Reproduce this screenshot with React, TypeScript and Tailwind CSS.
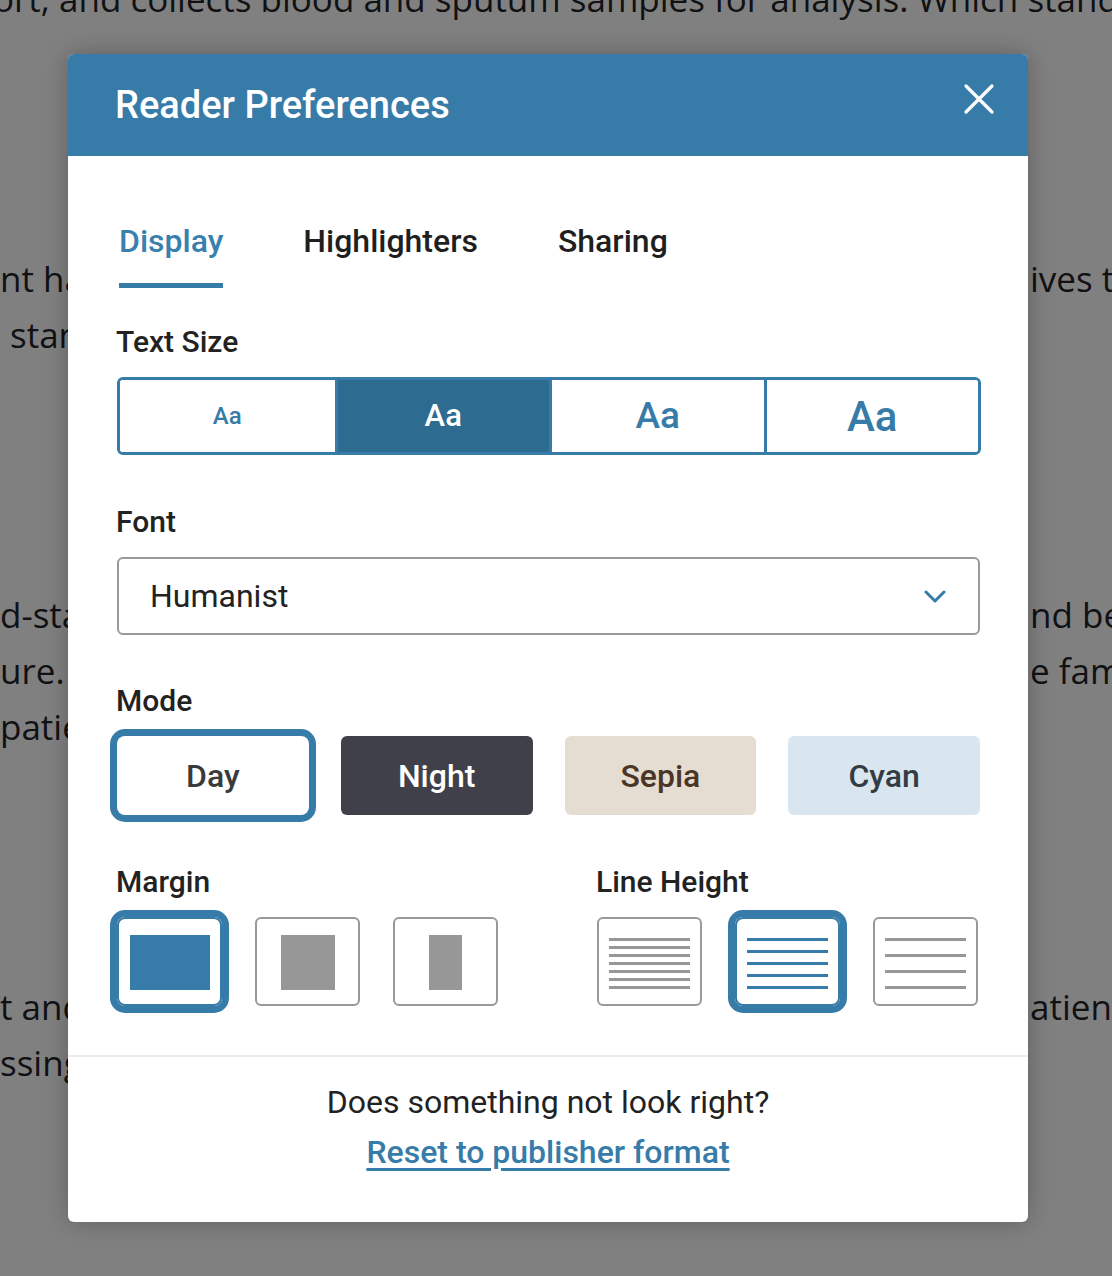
import { useState } from "react";

const BLUE = "#377ca9";

type BgLine = { left?: string; right?: string; indent?: boolean };

// visible scraps of the article behind the overlay, one entry per 56px line
const bgLines: BgLine[] = [
    {},
    {},
    {},
    {},
    { left: "nt has been admitted", right: "ives the patient" },
    { left: "standard", indent: true },
    {},
    {},
    {},
    {},
    { left: "d-standard", right: "nd begins" },
    { left: "ure. The nurse", right: "e family" },
    { left: "patient" },
    {},
    {},
    {},
    {},
    { left: "t and the", right: "atient's" },
    { left: "ssing the" },
    {},
    {},
    {}
];

const Background = () => (
    <div
        className="-mt-[29px] text-[35px] leading-[56px] text-[#111114]"
        style={{ fontFamily: "'Open Sans', 'Liberation Sans', sans-serif" }}
    >
        <div className="h-[56px] whitespace-nowrap -ml-[7px]">
            ort, and collects blood and sputum samples for analysis. Which standard
        </div>
        {bgLines.map((line, i) => (
            <div key={i} className="grid h-[56px] grid-cols-[1030px_1fr] whitespace-nowrap">
                <span className={line.indent ? "pl-[10px]" : ""}>{line.left}</span>
                <span>{line.right}</span>
            </div>
        ))}
    </div>
);

const CloseIcon = () => (
    <svg width="32" height="32" viewBox="0 0 32 32" fill="none">
        <path d="M3 3L29 29M29 3L3 29" stroke="white" strokeWidth="3.2" strokeLinecap="round" />
    </svg>
);

const ChevronDown = () => (
    <svg width="22" height="13" viewBox="0 0 22 13" fill="none">
        <path d="M2 2L11 11L20 2" stroke={BLUE} strokeWidth="3" strokeLinecap="round" strokeLinejoin="round" />
    </svg>
);

const Label = ({ text }: { text: string }) => (
    <div className="text-[30px] font-medium leading-[34px] text-[#222]">{text}</div>
);

const sizes = ["text-[24px]", "text-[31px]", "text-[37px]", "text-[42px]"];

const modes = [
    { name: "Day", className: "bg-white text-[#3a3a3a]" },
    { name: "Night", className: "bg-[#40404b] text-white" },
    { name: "Sepia", className: "bg-[#e5ddd2] text-[#4b3526]" },
    { name: "Cyan", className: "bg-[#d9e6ef] text-[#343b44]" }
];

const margins = ["w-[80px]", "w-[54px]", "w-[33px]"];
const lineCounts = [7, 5, 4];

const optionBox = (selected: boolean) =>
    selected
        ? "border-2 border-[#377ca9] ring-[7px] ring-[#377ca9] rounded-lg"
        : "border-2 border-[#999] rounded-md";

export default function App() {
    const [tab, setTab] = useState(0);
    const [size, setSize] = useState(1);
    const [mode, setMode] = useState(0);
    const [margin, setMargin] = useState(0);
    const [lineHeight, setLineHeight] = useState(1);

    return (
        <div className="relative h-[1276px] w-full overflow-hidden bg-[#808080]">
            <Background />

            <div
                className="absolute left-[68px] top-[54px] z-10 w-[960px] overflow-hidden rounded-md bg-white shadow-[0_0_24px_rgba(0,0,0,0.25)]"
                style={{ fontFamily: "Roboto, 'Liberation Sans', sans-serif" }}
            >
                <header className="flex h-[102px] items-center justify-between bg-[#377ca9] pl-[47px] pr-[33px]">
                    <h1 className="text-[38px] font-medium text-white">Reader Preferences</h1>
                    <button className="-mt-[12px]">
                        <CloseIcon />
                    </button>
                </header>

                <div className="px-[48px] pt-[65px]">
                    <nav className="ml-[3px] flex gap-[80px]">
                        {["Display", "Highlighters", "Sharing"].map((name, i) => (
                            <button key={name} onClick={() => setTab(i)} className="flex flex-col">
                                <span
                                    className={`text-[32px] font-medium leading-[40px] ${
                                        tab === i ? "text-[#3a80ad]" : "text-[#1f1f1f]"
                                    }`}
                                >
                                    {name}
                                </span>
                                <span
                                    className={`mt-[22px] h-[5px] w-full ${tab === i ? "bg-[#377ca9]" : "bg-transparent"}`}
                                />
                            </button>
                        ))}
                    </nav>

                    <div className="mt-[37px]">
                        <Label text="Text Size" />
                    </div>
                    <div className="mt-[18px] ml-[1px] -mr-[1px] grid h-[78px] grid-cols-4 overflow-hidden rounded-md border-[3px] border-[#377ca9]">
                        {sizes.map((cls, i) => (
                            <button
                                key={i}
                                onClick={() => setSize(i)}
                                className={`flex items-center justify-center font-medium ${cls} ${
                                    i > 0 ? "border-l-[3px] border-[#377ca9]" : ""
                                } ${size === i ? "bg-[#2d6b90] text-white" : "bg-white text-[#377ca9]"}`}
                            >
                                Aa
                            </button>
                        ))}
                    </div>

                    <div className="mt-[50px]">
                        <Label text="Font" />
                    </div>
                    <div className="mt-[18px] ml-[1px] flex h-[78px] items-center justify-between rounded-md border-2 border-[#999] pl-[31px] pr-[32px]">
                        <span className="text-[32px] text-[#222]">Humanist</span>
                        <ChevronDown />
                    </div>

                    <div className="mt-[49px]">
                        <Label text="Mode" />
                    </div>
                    <div className="mt-[18px] ml-[1px] flex gap-[32px]">
                        {modes.map((m, i) => (
                            <button
                                key={m.name}
                                onClick={() => setMode(i)}
                                className={`flex h-[79px] w-[192px] items-center justify-center text-[32px] font-medium ${m.className} ${
                                    mode === i ? "rounded-lg ring-[7px] ring-[#377ca9]" : "rounded-md"
                                }`}
                            >
                                {m.name}
                            </button>
                        ))}
                    </div>

                    <div className="mt-[50px] grid grid-cols-[480px_1fr]">
                        <div>
                            <Label text="Margin" />
                            <div className="mt-[18px] ml-[1px] flex gap-[33px]">
                                {margins.map((w, i) => (
                                    <button
                                        key={i}
                                        onClick={() => setMargin(i)}
                                        className={`flex h-[89px] w-[105px] items-center justify-center ${optionBox(margin === i)}`}
                                    >
                                        <span
                                            className={`mt-[2px] h-[55px] ${w} ${margin === i ? "bg-[#377ca9]" : "bg-[#979797]"}`}
                                        />
                                    </button>
                                ))}
                            </div>
                        </div>
                        <div>
                            <Label text="Line Height" />
                            <div className="mt-[18px] ml-[1px] flex gap-[33px]">
                                {lineCounts.map((count, i) => (
                                    <button
                                        key={i}
                                        onClick={() => setLineHeight(i)}
                                        className={`flex h-[89px] w-[105px] items-center justify-center ${optionBox(lineHeight === i)}`}
                                    >
                                        <span className="mt-[4px] flex h-[51px] w-[81px] flex-col justify-between">
                                            {Array.from({ length: count }).map((_, j) => (
                                                <span
                                                    key={j}
                                                    className={`h-[3px] w-full ${lineHeight === i ? "bg-[#377ca9]" : "bg-[#979797]"}`}
                                                />
                                            ))}
                                        </span>
                                    </button>
                                ))}
                            </div>
                        </div>
                    </div>
                </div>

                <div className="mt-[49px] h-[2px] bg-[#ebebeb]" />

                <footer className="flex flex-col items-center pb-[50px] pt-[25px]">
                    <p className="text-[32px] leading-[40px] text-[#222]">Does something not look right?</p>
                    <a href="#" className="mt-[10px] text-[32px] font-medium leading-[40px] text-[#377ca9] underline underline-offset-[5px]">
                        Reset to publisher format
                    </a>
                </footer>
            </div>
        </div>
    );
}
